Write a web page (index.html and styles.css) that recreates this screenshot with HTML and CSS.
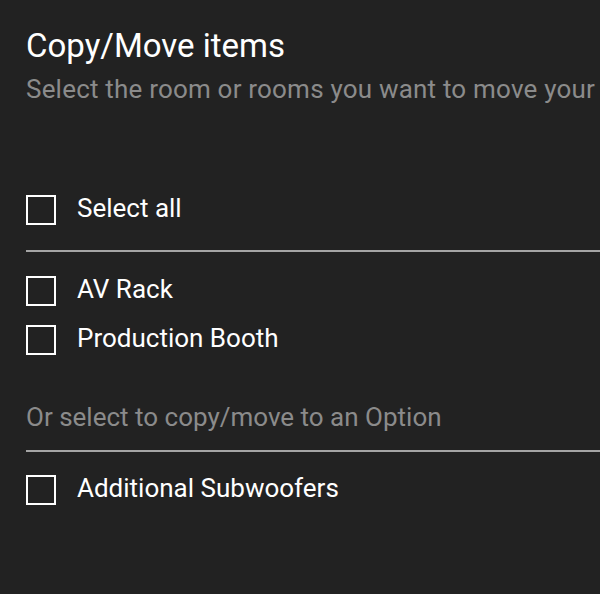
FILE: index.html
```html
<!DOCTYPE html>
<html>
<head>
<meta charset="utf-8">
<link rel="stylesheet" href="styles.css">
</head>
<body>
<div class="dialog">
  <h1 class="title">Copy/Move items</h1>
  <p class="subtitle">Select the room or rooms you want to move your</p>
  <div class="list">
    <label class="row row-all"><span class="box"></span><span class="label">Select all</span></label>
    <hr class="rule rule-top">
    <label class="row"><span class="box"></span><span class="label">AV Rack</span></label>
    <label class="row"><span class="box"></span><span class="label">Production Booth</span></label>
    <p class="section">Or select to copy/move to an Option</p>
    <hr class="rule rule-option">
    <label class="row"><span class="box"></span><span class="label">Additional Subwoofers</span></label>
  </div>
</div>
</body>
</html>
```
FILE: styles.css
```css
html, body {
  margin: 0;
  padding: 0;
  background: #222222;
  overflow: hidden;
}
.dialog {
  width: 600px;
  height: 594px;
  padding-left: 26px;
  box-sizing: border-box;
  font-family: Roboto, "Liberation Sans", sans-serif;
  color: #ffffff;
}
.title {
  margin: 0;
  padding-top: 26px;
  font-size: 33px;
  font-weight: 400;
  line-height: 40px;
  white-space: nowrap;
}
.subtitle {
  margin: 8px 0 0;
  font-size: 26px;
  line-height: 30px;
  letter-spacing: 0.2px;
  color: #8b8b8b;
  white-space: nowrap;
}
.list {
  display: flex;
  flex-direction: column;
  padding-top: 91px;
}
.row {
  display: flex;
  align-items: flex-start;
  gap: 21px;
  height: 30px;
  margin-bottom: 19px;
}
.row-all {
  margin-bottom: 0;
}
.box {
  width: 30px;
  height: 30px;
  box-sizing: border-box;
  border: 2px solid #ffffff;
  flex: none;
}
.label {
  font-size: 26px;
  line-height: 26px;
  white-space: nowrap;
}
.rule {
  border: 0;
  height: 2px;
  background: #a5a5a5;
  width: 100%;
}
.rule-top {
  margin: 25px 0 24px;
}
.rule-option {
  margin: 18px 0 23px;
}
.section {
  margin: 28px 0 0;
  font-size: 26px;
  line-height: 30px;
  color: #8b8b8b;
  white-space: nowrap;
}
```
